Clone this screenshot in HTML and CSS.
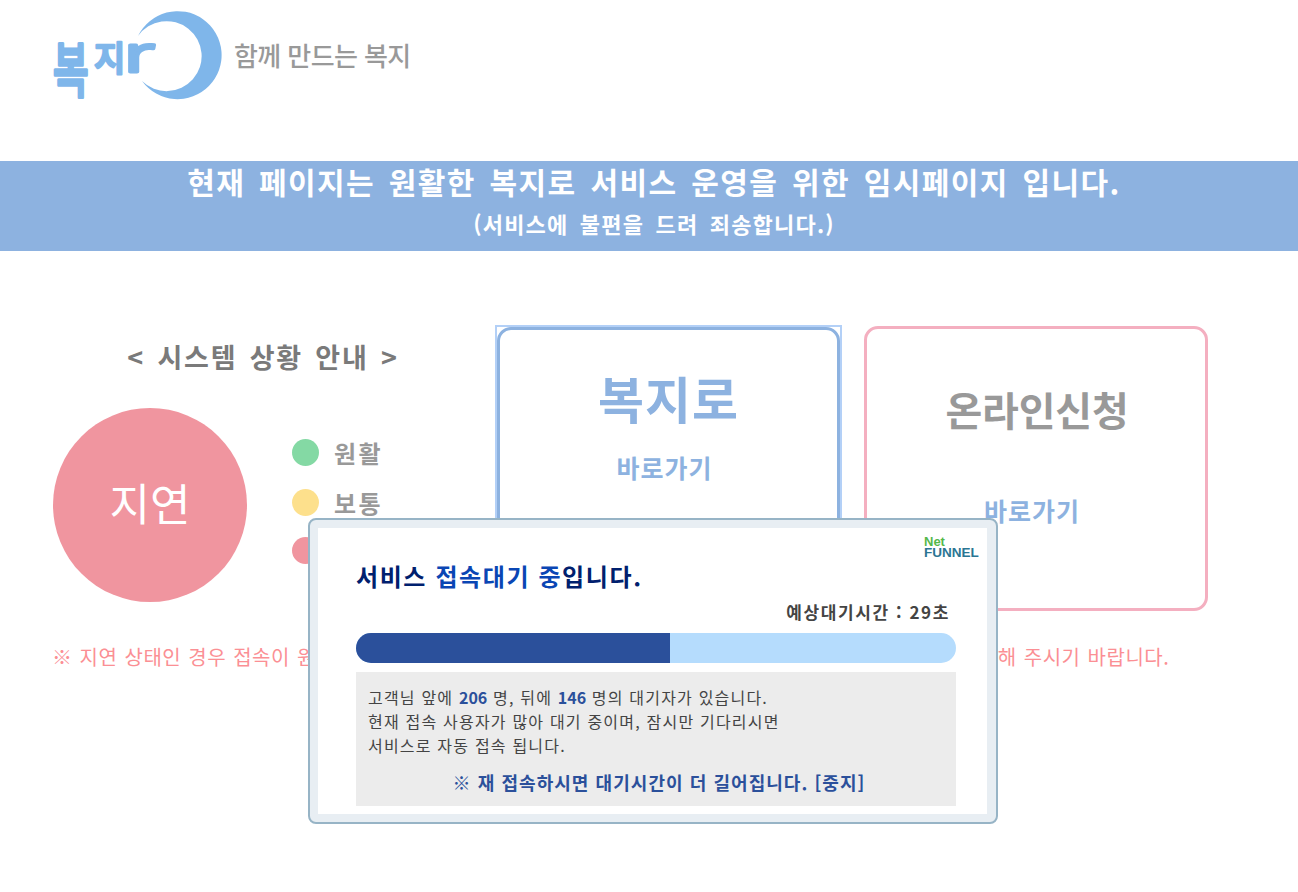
FILE: index.html
```html
<!DOCTYPE html>
<html lang="ko">
<head>
    <meta charset="UTF-8">
    <title>복지로</title>
    <link rel="stylesheet" href="styles.css">
</head>
<body>
    <header class="top">
        <div class="logo">
            <svg class="logo_mark" width="170" height="92" viewBox="0 0 170 92">
                <path d="M85 26 A44 44 0 1 1 89 71 A35 35 0 1 0 85 26 Z" fill="#7fb6ea"/>
                <text class="logo_ko" transform="translate(0,82) scale(.92,1.42)">복</text>
                <text class="logo_ji" transform="translate(41,61)">지</text>
                <text class="logo_r" transform="translate(71,62) scale(1.5,1)">r</text>
            </svg>
            <span class="logo_txt">함께 만드는 복지</span>
        </div>
    </header>

    <div class="banner">
        <p class="banner_t">현재 페이지는 원활한 복지로 서비스 운영을 위한 임시페이지 입니다.</p>
        <p class="banner_s">(서비스에 불편을 드려 죄송합니다.)</p>
    </div>

    <div class="main">
        <div class="status">
            <h2 class="status_t">&lt; 시스템 상황 안내 &gt;</h2>
            <div class="status_box">
                <div class="circle">지연</div>
                <ul class="legend">
                    <li><i class="dot green"></i>원활</li>
                    <li><i class="dot yellow"></i>보통</li>
                    <li><i class="dot red"></i>지연</li>
                </ul>
            </div>
        </div>
        <a class="card card_on" href="#">
            <span class="card_big">복지로</span>
            <span class="card_go">바로가기</span>
        </a>
        <a class="card card_pink" href="#">
            <span class="card_big2">온라인신청</span>
            <span class="card_go2">바로가기</span>
        </a>
    </div>
    <p class="notice">※ 지연 상태인 경우 접속이 원활하지 않을 수 있습니다. 온라인신청 서비스를 이용하시거나 잠시 후 다시 이용해 주시기 바랍니다.</p>

    <div class="funnel">
        <div class="funnel_in">
            <div class="nf_logo"><span class="nf_net">Net</span><span class="nf_fun">FUNNEL</span></div>
            <h3 class="nf_t">서비스 <em>접속대기 중</em>입니다.</h3>
            <div class="nf_time">예상대기시간 : 29초</div>
            <div class="bar"><div class="bar_on"></div></div>
            <div class="nf_box">
                <p>고객님 앞에 <b>206</b> 명, 뒤에 <b>146</b> 명의 대기자가 있습니다.<br>현재 접속 사용자가 많아 대기 중이며, 잠시만 기다리시면<br>서비스로 자동 접속 됩니다.</p>
                <p class="nf_warn">※ 재 접속하시면 대기시간이 더 길어집니다. [중지]</p>
            </div>
        </div>
    </div>
</body>
</html>
```

FILE: styles.css
```css
*{
    margin:0;padding:0;
    box-sizing:border-box;
}
html,body{
    width:100%;
    height:100%;
    background-color:#fff;
    color:#444;
    font-family:"Noto Sans CJK KR","Noto Sans",sans-serif;
}
ul,li{
    list-style:none;
}
a{
    text-decoration:none;
}
/* 상단 */
.top{
    height:161px;
    padding:10px 0 0 53px;
}
.logo{
    display:flex;
    align-items:flex-start;
}
.logo_mark{
    overflow:visible;
}
.logo_ko,.logo_ji,.logo_r{
    fill:#7fb6ea;
    stroke:#7fb6ea;
    stroke-width:2.5px;
    stroke-linejoin:round;
    stroke-linecap:round;
    font-weight:500;
}
.logo_ko{
    font-size:42px;
}
.logo_ji{
    font-size:34px;
}
.logo_r{
    font-family:"Noto Sans",sans-serif;
    font-size:50px;
    font-weight:400;
    stroke-width:3px;
}
.logo_txt{
    margin:25px 0 0 11px;
    font-size:26px;
    font-weight:500;
    line-height:40px;
    letter-spacing:-.6px;
    color:#999;
}
.banner{
    height:90px;
    padding-left:10px;
    background-color:#8db2e0;
    color:#fff;
    text-align:center;
    font-weight:700;
}
.banner_t{
    font-size:30px;
    line-height:40px;
    letter-spacing:1.4px;
    word-spacing:4px;
}
.banner_s{
    font-size:22px;
    line-height:44px;
    letter-spacing:1.2px;
    word-spacing:4px;
}
/* 본문 */
.main{
    display:flex;
    padding:76px 0 0 53px;
}
.status{
    width:444px;
}
.status_t{
    width:420px;
    margin-bottom:29px;
    padding-top:8px;
    text-align:center;
    font-size:27px;
    line-height:44px;
    letter-spacing:1.8px;
    word-spacing:3px;
    color:#7a7a7a;
}
.status_box{
    display:flex;
}
.circle{
    width:194px;
    height:194px;
    border-radius:50%;
    background-color:#f0959f;
    color:#fff;
    font-size:44px;
    line-height:188px;
    text-align:center;
}
.legend{
    margin:19px 0 0 45px;
    font-size:24px;
    font-weight:700;
    letter-spacing:2.3px;
    color:#999;
}
.legend li{
    display:flex;
    align-items:center;
    height:50px;
}
.legend li:nth-child(2){
    margin-bottom:-2px;
}
.dot{
    width:27px;
    height:27px;
    margin-right:15px;
    border-radius:50%;
}
.green{background-color:#84d9a4;}
.yellow{background-color:#fde08c;}
.red{background-color:#f0959f;}
.card{
    display:block;
    width:344px;
    height:284px;
    border:3px solid #8db2e0;
    border-radius:14px;
    text-align:center;
}
.card_on{
    position:relative;
    width:343px;
}
.card_on::before{
    content:"";
    position:absolute;
    inset:-5px;
    border:2px solid #b3d0f7;
}
.card_pink{
    height:285px;
    margin:-1px 0 0 24px;
    border-color:#f4afc0;
}
.card_big,.card_big2,.card_go,.card_go2{
    display:block;
    font-weight:700;
}
.card_big{
    margin-top:32px;
    font-size:50px;
    line-height:70px;
    letter-spacing:1px;
    color:#8db2e0;
}
.card_go{
    margin-top:15px;
    padding-right:8px;
    font-size:25px;
    line-height:40px;
    letter-spacing:1px;
    color:#8db2e0;
}
.card_big2{
    margin-top:50px;
    padding-left:2px;
    font-size:40px;
    line-height:60px;
    letter-spacing:-.2px;
    color:#999;
}
.card_go2{
    margin-top:51px;
    padding-right:8px;
    font-size:25px;
    line-height:40px;
    letter-spacing:1px;
    color:#8db2e0;
}
.notice{
    margin-top:28px;
    padding-left:52px;
    white-space:nowrap;
    font-size:20px;
    line-height:36px;
    letter-spacing:.5px;
    word-spacing:1px;
    color:#fb8f94;
}
/* 대기창 */
.funnel{
    position:absolute;
    left:308px;
    top:518px;
    width:690px;
    height:306px;
    padding:8px 9px 8px 8px;
    border:2px solid #97b4c6;
    border-radius:8px;
    background-color:#e8eef3;
}
.funnel_in{
    position:relative;
    height:100%;
    padding:30px 30px 0 38px;
    background-color:#fff;
}
.nf_logo{
    position:absolute;
    top:8px;
    right:8px;
    width:55px;
    font-family:"Liberation Sans",sans-serif;
    font-weight:700;
}
.nf_logo span{
    display:block;
    height:11px;
}
.nf_net{
    font-size:13px;
    line-height:11px;
    color:#55b84a;
}
.nf_fun{
    font-size:13.5px;
    line-height:12px;
    color:#2a7593;
}
.nf_t{
    font-size:24px;
    line-height:36px;
    letter-spacing:1.6px;
    color:#00206e;
}
.nf_t em{
    font-style:normal;
    color:#0a46b4;
}
.nf_time{
    margin-top:4px;
    padding-right:7px;
    text-align:right;
    font-size:17px;
    line-height:28px;
    letter-spacing:1.6px;
    font-weight:700;
    color:#444;
}
.bar{
    width:600px;
    height:30px;
    margin-top:7px;
    border-radius:15px;
    background-color:#b5dcfd;
    overflow:hidden;
}
.bar_on{
    width:314px;
    height:100%;
    background-color:#2b509b;
}
.nf_box{
    width:600px;
    height:134px;
    margin-top:9px;
    padding:13px 12px 0;
    background-color:#ececec;
    font-size:16px;
    line-height:24px;
    letter-spacing:1.2px;
    color:#444;
}
.nf_box b{
    letter-spacing:0;
    color:#2b509b;
}
.nf_warn{
    margin-top:12px;
    padding-left:6px;
    text-align:center;
    font-size:18px;
    font-weight:700;
    line-height:26px;
    letter-spacing:1.05px;
    color:#2b509b;
}
```
